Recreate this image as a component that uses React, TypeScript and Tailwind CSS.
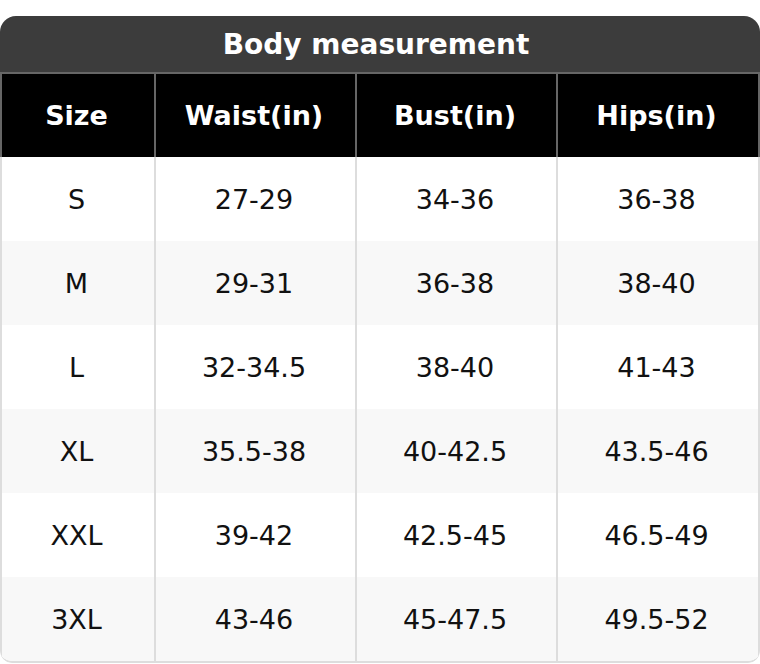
import React from "react";

const rows = [
  ["S", "27-29", "34-36", "36-38"],
  ["M", "29-31", "36-38", "38-40"],
  ["L", "32-34.5", "38-40", "41-43"],
  ["XL", "35.5-38", "40-42.5", "43.5-46"],
  ["XXL", "39-42", "42.5-45", "46.5-49"],
  ["3XL", "43-46", "45-47.5", "49.5-52"],
];

const headers = ["Size", "Waist(in)", "Bust(in)", "Hips(in)"];
const cols = "grid grid-cols-[154px_201px_201px_204px]";

export default function App() {
  return (
    <div className="w-[760px] h-[664px] bg-white pt-4" style={{ fontFamily: '"DejaVu Sans", sans-serif' }}>
      <div className="rounded-t-[16px] rounded-b-[12px] overflow-hidden">
        <div className="h-[58px] bg-[#3c3c3c] border-b-2 border-[#666] flex items-center justify-center pr-2 pt-[2px] text-white font-bold text-[28px]">
          Body measurement
        </div>
        <div className={`${cols} h-[83px] bg-black`}>
          {headers.map((h, i) => (
            <div
              key={h}
              className={`flex items-center justify-center pr-[3px] pt-[2px] text-white font-bold text-[27px] border-l-2 border-[#666] ${i === 3 ? "border-r-2" : ""}`}
            >
              {h}
            </div>
          ))}
        </div>
        <div className="border-b-2 border-[#dddddd] rounded-b-[12px] overflow-hidden">
          {rows.map((r, ri) => (
            <div key={ri} className={`${cols} h-[84px] ${ri % 2 === 1 ? "bg-[#f8f8f8]" : "bg-white"}`}>
              {r.map((c, ci) => (
                <div
                  key={ci}
                  className={`flex items-center justify-center pr-[3px] pt-[2px] text-[#111] text-[27px] border-l-2 border-[#dddddd] ${ci === 3 ? "border-r-2" : ""}`}
                >
                  {c}
                </div>
              ))}
            </div>
          ))}
        </div>
      </div>
    </div>
  );
}
